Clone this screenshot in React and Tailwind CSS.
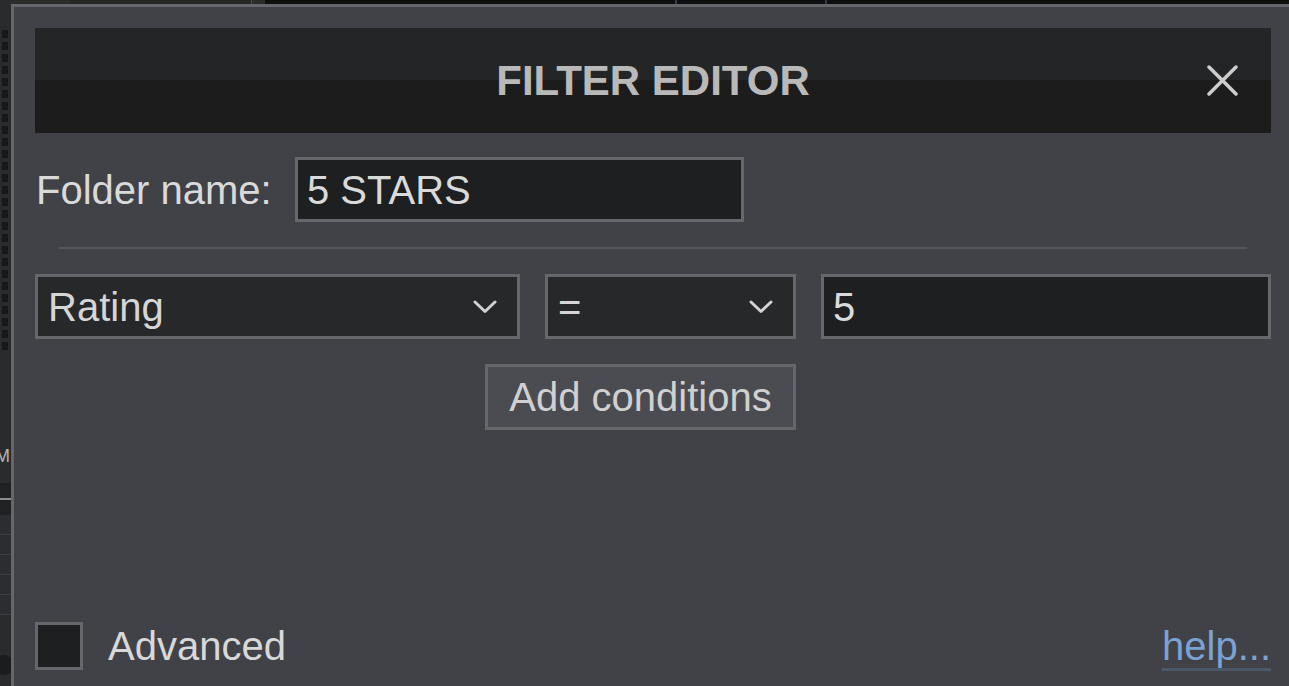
import React from 'react';

const font = { fontFamily: '"Liberation Sans", Arial, sans-serif' };

const Chevron = () => (
  <svg width="24" height="14" viewBox="0 0 24 14" fill="none" className="shrink-0">
    <polyline points="2,2 12,11.5 22,2" stroke="#d2d2d2" strokeWidth="3" strokeLinecap="round" strokeLinejoin="round" />
  </svg>
);

const Select = ({ value, width }) => (
  <div className={`${width} h-[65px] border-[3px] border-[#66666b] bg-[#27282a] pl-[10px] pr-[20px] flex items-center justify-between text-[40px] leading-none text-[#d6d6d6]`}>
    <span>{value}</span>
    <Chevron />
  </div>
);

const SideStrip = () => {
  const squares = Array.from({ length: 27 });
  return (
    <div className="w-[11px] shrink-0 h-full bg-[#2a2b2d] flex flex-col overflow-hidden">
      <div className="h-[30px]" />
      <div className="flex flex-col gap-[4px] pl-[2px]">
        {squares.map((_, i) => (
          <div key={i} className="w-[6px] h-[8px] bg-[#17181a]" />
        ))}
      </div>
      <div className="h-[95px]" />
      {/* label of the panel behind, clipped by the dialog */}
      <div className="h-[22px] overflow-hidden text-[18px] leading-[22px] text-[#b4b4b4]">
        <span className="-ml-[5px]">M</span>
      </div>
      <div className="h-[16px]" />
      <div className="h-[32px] bg-[#202123] flex flex-col justify-center">
        <div className="h-[2px] bg-[#8e8e8e]" />
      </div>
      <div className="flex flex-col">
        {[0, 1, 2, 3, 4].map((i) => (
          <div key={i} className="h-[20px] border-b border-[#3d3e41] bg-[#2c2d30]" />
        ))}
      </div>
      <div className="h-[40px]" />
      <div className="w-[20px] h-[20px] rounded-full bg-[#1b1c1e] -ml-[6px]" />
    </div>
  );
};

const TopStrip = () => (
  <div className="h-[4px] shrink-0 flex">
    <div className="w-[59px] bg-[#2b2c2e]" />
    <div className="w-[181px] bg-[#252628]" />
    <div className="w-[1px] bg-[#4a4b4e]" />
    <div className="w-[13px] bg-[#2a2b2d]" />
    <div className="flex-1 bg-[#0e0f11] flex">
      <div className="w-[410px]" />
      <div className="w-[2px] bg-[#3a3b3e]" />
      <div className="w-[148px]" />
      <div className="w-[2px] bg-[#3a3b3e]" />
    </div>
  </div>
);

export default function App() {
  return (
    <div className="w-[1289px] h-[686px] overflow-hidden bg-[#2a2b2d] flex" style={font}>
      <SideStrip />
      <div className="flex-1 flex flex-col">
        <TopStrip />
        <div className="flex-1 border-l-[3px] border-t-[3px] border-[#66666b] bg-[#414247] pt-[21px] pl-[21px] pr-[18px]">
          {/* Header */}
          <div className="relative h-[105px] bg-[linear-gradient(to_bottom,#242527_50%,#1c1c1d_50%)] flex items-center justify-center">
            <h1 className="text-[42px] font-bold text-[#b9b9b9]">FILTER EDITOR</h1>
            <button className="absolute right-[33px] top-[37px]">
              <svg width="31" height="31" viewBox="0 0 31 31">
                <line x1="2" y1="2" x2="29" y2="29" stroke="#cdcdcd" strokeWidth="3.5" strokeLinecap="round" />
                <line x1="29" y1="2" x2="2" y2="29" stroke="#cdcdcd" strokeWidth="3.5" strokeLinecap="round" />
              </svg>
            </button>
          </div>

          {/* Folder name */}
          <div className="mt-[24px] flex items-center">
            <label className="w-[260px] pl-[1px] text-[40px] leading-none text-[#dadada]">Folder name:</label>
            <div className="w-[449px] h-[65px] border-[3px] border-[#66666b] bg-[#1e1f21] pl-[9px] flex items-center text-[40px] leading-none text-[#dadada]">
              5 STARS
            </div>
          </div>

          <div className="mt-[25px] mx-[24px] h-[2px] bg-[#55565b]" />

          {/* Condition row */}
          <div className="mt-[25px] flex gap-[25px]">
            <Select value="Rating" width="w-[485px]" />
            <Select value="=" width="w-[251px]" />
            <div className="flex-1 h-[65px] border-[3px] border-[#66666b] bg-[#1e1f21] pl-[9px] flex items-center text-[40px] leading-none text-[#dadada]">
              5
            </div>
          </div>

          <button className="mt-[25px] ml-[450px] w-[311px] h-[66px] border-[3px] border-[#66666b] bg-[#4b4c51] text-[40px] leading-none text-[#d0d0d0] flex items-center justify-center">
            Add conditions
          </button>

          {/* Footer */}
          <div className="mt-[192px] flex items-start justify-between">
            <div className="flex items-center">
              <div className="w-[48px] h-[48px] border-[3px] border-[#66666b] bg-[#1e1f21]" />
              <span className="ml-[25px] text-[40px] leading-none text-[#d8d8d8]">Advanced</span>
            </div>
            <a className="inline-block leading-none text-[40px] text-[#7aa3d2] pb-[2px] border-b-[3px] border-[#4b5868] mt-[4px]">
              help...
            </a>
          </div>
        </div>
      </div>
    </div>
  );
}
